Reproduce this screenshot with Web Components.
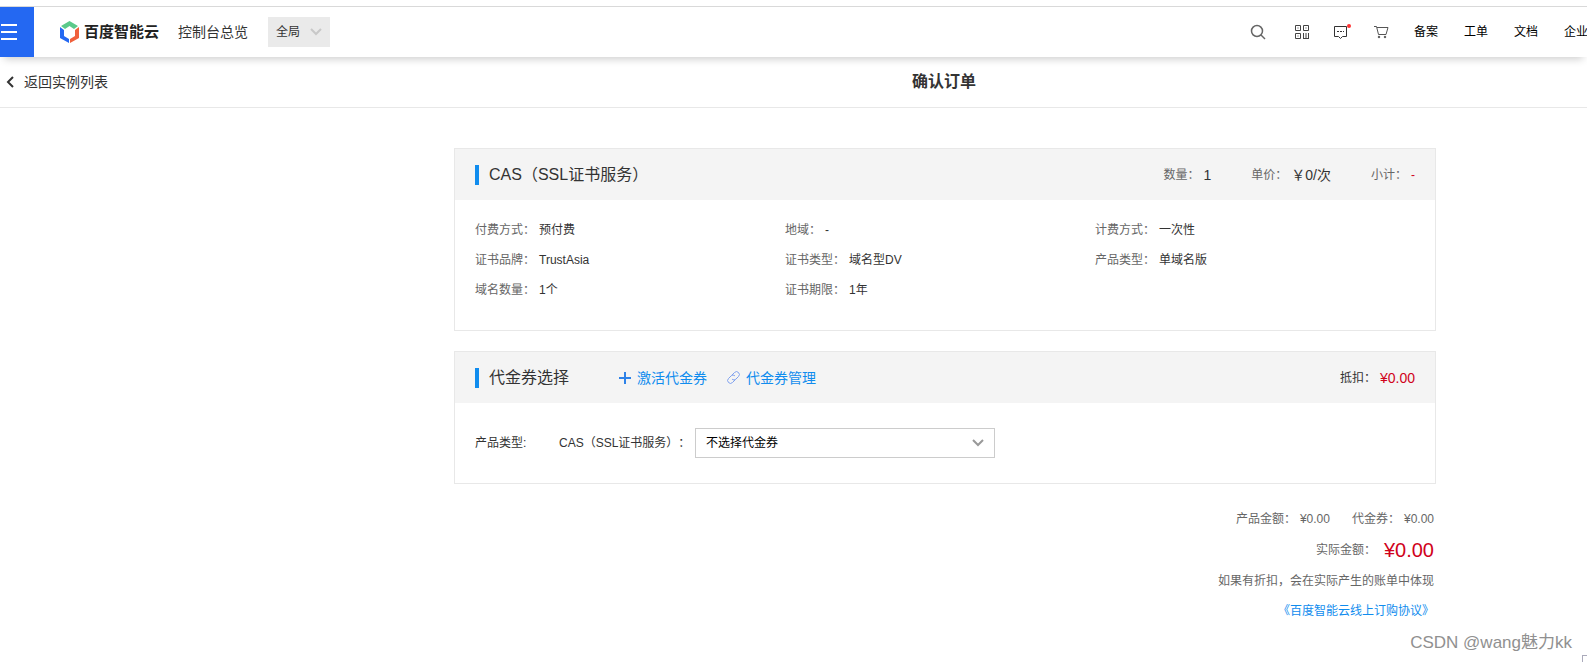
<!DOCTYPE html>
<html lang="zh-CN">
<head>
<meta charset="utf-8">
<title>确认订单</title>
<style>
  body {
    margin: 0;
    min-height: 100vh;
    position: relative;
    overflow: hidden;
    background: #fff;
    color: #333;
    font: 12px/20px "Liberation Sans", "Noto Sans CJK SC", sans-serif;
    text-spacing-trim: space-all;
    --page-shift: 303px;
    --blue: #108cee;
    --red: #d0021b;
    --grey: #666;
  }
  main {
    display: flex;
    flex-direction: column;
    gap: 20px;
    max-width: 982px;
    padding: 40px 0 0 var(--page-shift);
    margin: 0 auto;
  }
</style>
</head>
<body>
<console-header></console-header>
<page-bar heading="确认订单">返回实例列表</page-bar>
<main>
  <order-panel heading="CAS（SSL证书服务）">
    <price-list slot="extra"></price-list>
    <order-details></order-details>
  </order-panel>
  <order-panel heading="代金券选择">
    <coupon-links slot="links"></coupon-links>
    <coupon-total slot="extra"></coupon-total>
    <coupon-form></coupon-form>
  </order-panel>
  <order-summary></order-summary>
</main>
<water-mark>CSDN @wang魅力kk</water-mark>

<script>
class BaseElement extends HTMLElement {
  connectedCallback() {
    if (this.shadowRoot) return;
    const template = document.createElement("template");
    template.innerHTML = this.render();
    this.attachShadow({ mode: "open" }).appendChild(template.content.cloneNode(true));
  }
}

class ConsoleHeader extends BaseElement {
  render() {
    return `
      <style>
        :host { display: block; padding-top: 6px; }
        header {
          display: flex;
          align-items: center;
          height: 50px;
          border-top: 1px solid #d9d9d9;
          background: #fff;
          box-shadow: 0 6px 8px -4px rgba(0, 0, 0, .2);
        }
        button { border: 0; padding: 0; font: inherit; color: inherit; background: none; }
        a { color: inherit; text-decoration: none; white-space: nowrap; }
        svg { display: block; }
        .menu { width: 34px; height: 50px; background: #2468f2; margin-right: 25px; }
        .logo { display: flex; align-items: center; gap: 4px; font-size: 15px; font-weight: bold; color: #222; margin-right: 19px; }
        .overview { font-size: 14px; margin-right: 20px; }
        .region {
          display: flex;
          align-items: center;
          justify-content: space-between;
          width: 62px;
          height: 30px;
          padding: 0 8px;
          box-sizing: border-box;
          background: #eaeaea;
        }
        nav { display: flex; align-items: center; margin: 0 -1px 0 auto; color: #000; }
        .icons { display: flex; gap: 24px; margin-right: 24px; }
        .icons button { width: 16px; height: 22px; display: flex; align-items: center; justify-content: center; }
        .icons button:first-child { margin-right: 4px; }
        .links { display: flex; gap: 26px; }
      </style>
      <header>
        <button class="menu" aria-label="菜单">
          <svg width="34" height="50"><path d="M1 18h16M1 25h16M1 32h16" stroke="#fff" stroke-width="2"/></svg>
        </button>
        <a class="logo" href="#">
          <svg width="21" height="24" viewBox="0 0 21 24">
            <path d="M2 6 10.500 1 19 6l-4 3-4.500-3L6 9z" fill="#5bc98a"/>
            <path d="M1 7l4 3v6l5 3v4l-9-5z" fill="#2468f2"/>
            <path d="M20 7l-4 3v6l-5 3v4l9-5z" fill="#f0603c"/>
          </svg>
          百度智能云
        </a>
        <a class="overview" href="#">控制台总览</a>
        <button class="region">全局
          <svg width="12" height="8" viewBox="0 0 12 8" fill="none" stroke="#c8c8c8" stroke-width="2"><path d="m1 1 5 5 5-5"/></svg>
        </button>
        <nav>
          <div class="icons">
            <button aria-label="搜索"><svg width="16" height="16" fill="none" stroke="#666"><circle cx="7" cy="7" r="5.5" stroke-width="1.5"/><path d="m11 11 4 4" stroke-width="1.5"/></svg></button>
            <button aria-label="二维码"><svg width="14" height="14" fill="none" stroke="#444"><path d="M.5.5h5v5h-5zM8.500.5h5v5h-5zM.5 8.500h5v5h-5zM8.500 8v6M11 8v5M13.500 8v6M8.500 13.500h5M3 2.500v1M11 2.500v1M3 10.500v1"/></svg></button>
            <button aria-label="消息"><svg width="18" height="16" viewBox="0 0 18 16" style="flex:none" fill="none" stroke="#333"><path d="M1.500 2.500h12v10H9.500l-2 2-2-2h-4z"/><path d="M4 7.500h7" stroke-dasharray="2 1"/><circle cx="16" cy="2" r="2" fill="#f33" stroke="none"/></svg></button>
            <button aria-label="购物车"><svg width="15" height="14" fill="none" stroke="#555"><path d="M0 1.500h2.500l2 8H12l2-7H3"/><circle cx="5" cy="12" r=".8" fill="#333"/><circle cx="11" cy="12" r=".8" fill="#333"/></svg></button>
          </div>
          <div class="links">
            <a href="#">备案</a><a href="#">工单</a><a href="#">文档</a><a href="#">企业</a>
          </div>
        </nav>
      </header>`;
  }
}

class PageBar extends BaseElement {
  render() {
    return `
      <style>
        :host { display: flex; align-items: center; height: 50px; border-bottom: 1px solid #e8e8e8; }
        a { display: flex; align-items: center; gap: 10px; width: 295px; padding-left: 6px; font-size: 14px; color: #333; text-decoration: none; }
        h1 { flex: 1; margin: 0; font-size: 16px; text-align: center; color: #333; }
      </style>
      <a href="#">
        <svg width="8" height="12" fill="none" stroke="#333" stroke-width="2"><path d="M7 1 2 6l5 5"/></svg>
        <slot></slot>
      </a>
      <h1>${this.getAttribute("heading")}</h1>`;
  }
}

class OrderPanel extends BaseElement {
  render() {
    return `
      <style>
        :host { display: block; border: 1px solid #e8e8e8; }
        header { display: flex; align-items: center; height: 51px; padding: 0 20px; background: #f4f4f4; }
        h2 { margin: 0; padding-left: 10px; border-left: 4px solid var(--blue); font-size: 16px; line-height: 20px; font-weight: normal; }
        slot[name="extra"] { display: block; margin-left: auto; }
      </style>
      <header>
        <h2>${this.getAttribute("heading")}</h2>
        <slot name="links"></slot>
        <slot name="extra"></slot>
      </header>
      <slot></slot>`;
  }
}

class PriceList extends BaseElement {
  render() {
    return `
      <style>
        dl { display: flex; gap: 40px; margin: 0; }
        div { display: flex; gap: 4px; }
        dt { color: var(--grey); }
        dd { margin: 0; font-size: 14px; }
        .total { font-size: 12px; color: var(--red); }
      </style>
      <dl>
        <div><dt>数量：</dt><dd>1</dd></div>
        <div><dt>单价：</dt><dd>￥0/次</dd></div>
        <div><dt>小计：</dt><dd class="total">-</dd></div>
      </dl>`;
  }
}

class OrderDetails extends BaseElement {
  render() {
    const rows = [
      ["付费方式", "预付费"], ["地域", "-"], ["计费方式", "一次性"],
      ["证书品牌", "TrustAsia"], ["证书类型", "域名型DV"], ["产品类型", "单域名版"],
      ["域名数量", "1个"], ["证书期限", "1年"],
    ];
    return `
      <style>
        :host { display: block; padding: 20px 0 30px 20px; }
        dl { display: grid; grid-template-columns: 310px 310px 1fr; row-gap: 10px; margin: 0; }
        div { display: flex; gap: 4px; }
        dt { color: var(--grey); }
        dd { margin: 0; }
      </style>
      <dl>${rows.map(([name, value]) => `<div><dt>${name}：</dt><dd>${value}</dd></div>`).join("")}</dl>`;
  }
}

class CouponLinks extends BaseElement {
  render() {
    return `
      <style>
        :host { display: flex; gap: 20px; margin-left: 50px; font-size: 14px; }
        a { display: flex; align-items: center; gap: 6px; color: var(--blue); text-decoration: none; }
      </style>
      <a href="#"><svg width="12" height="12" stroke="#2e82e8" stroke-width="2"><path d="M6 0v12M0 6h12"/></svg>激活代金券</a>
      <a href="#"><svg width="13" height="13" fill="none" stroke="#7ea0ee"><path d="m5 4 2.500-2.500a2.600 2.600 0 0 1 4 4L9 8a2.600 2.600 0 0 1-4 0M8 9l-2.500 2.500a2.600 2.600 0 0 1-4-4L4 5a2.600 2.600 0 0 1 4 0"/></svg>代金券管理</a>`;
  }
}

class CouponTotal extends BaseElement {
  render() {
    return `
      <style>
        :host { display: flex; gap: 4px; }
        b { font-size: 14px; font-weight: normal; color: var(--red); }
      </style>
      <span>抵扣：</span><b>¥0.00</b>`;
  }
}

class CouponForm extends BaseElement {
  render() {
    return `
      <style>
        :host { display: flex; align-items: center; padding: 25px 20px; }
        .type { width: 84px; }
        label { width: 136px; white-space: nowrap; }
        .box { display: grid; align-items: center; width: 300px; }
        select, svg { grid-area: 1 / 1; }
        select {
          appearance: none;
          height: 30px;
          padding: 0 10px;
          border: 1px solid #ccc;
          border-radius: 0;
          background: #fff;
          font: inherit;
          color: #000;
        }
        svg { justify-self: end; margin-right: 11px; pointer-events: none; }
      </style>
      <span class="type">产品类型:</span>
      <label for="coupon">CAS（SSL证书服务）：</label>
      <div class="box">
        <select id="coupon"><option>不选择代金券</option></select>
        <svg width="12" height="8" fill="none" stroke="#999" stroke-width="2"><path d="m1 1 5 5 5-5"/></svg>
      </div>`;
  }
}

class OrderSummary extends BaseElement {
  render() {
    return `
      <style>
        :host { display: flex; flex-direction: column; align-items: flex-end; gap: 10px; padding: 5px 2px 0 0; color: var(--grey); }
        div { display: flex; align-items: center; gap: 4px; }
        .amounts { gap: 22px; }
        .pay { gap: 8px; line-height: 22px; }
        .pay b { font-size: 20px; font-weight: normal; color: var(--red); }
        p { margin: 0; }
        a { color: var(--blue); text-decoration: none; }
      </style>
      <div class="amounts">
        <div><span>产品金额：</span><span>¥0.00</span></div>
        <div><span>代金券：</span><span>¥0.00</span></div>
      </div>
      <div class="pay"><span>实际金额：</span><b>¥0.00</b></div>
      <p>如果有折扣，会在实际产生的账单中体现</p>
      <a href="#">《百度智能云线上订购协议》</a>`;
  }
}

class WaterMark extends BaseElement {
  render() {
    return `
      <style>
        :host { position: absolute; right: 15px; bottom: 9px; font-size: 17px; line-height: 20px; color: #909090; }
        i { position: fixed; right: 0; bottom: 0; width: 4px; height: 6px; border: solid #aab; border-width: 1px 0 0 1px; }
      </style>
      <slot></slot><i></i>`;
  }
}

customElements.define("console-header", ConsoleHeader);
customElements.define("page-bar", PageBar);
customElements.define("order-panel", OrderPanel);
customElements.define("price-list", PriceList);
customElements.define("order-details", OrderDetails);
customElements.define("coupon-links", CouponLinks);
customElements.define("coupon-total", CouponTotal);
customElements.define("coupon-form", CouponForm);
customElements.define("order-summary", OrderSummary);
customElements.define("water-mark", WaterMark);
</script>
</body>
</html>
